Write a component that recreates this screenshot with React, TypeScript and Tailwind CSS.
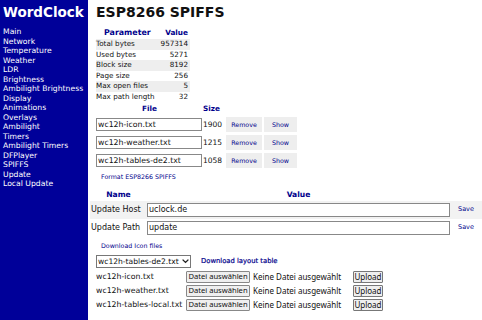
const font = "font-['DejaVu_Sans',Verdana,sans-serif]";
const uiFont = "font-['Noto_Sans','Open_Sans',sans-serif]";

const navItems = [
  "Main",
  "Network",
  "Temperature",
  "Weather",
  "LDR",
  "Brightness",
  "Ambilight Brightness",
  "Display",
  "Animations",
  "Overlays",
  "Ambilight",
  "Timers",
  "Ambilight Timers",
  "DFPlayer",
  "SPIFFS",
  "Update",
  "Local Update",
];

const params: [string, string][] = [
  ["Total bytes", "957314"],
  ["Used bytes", "5271"],
  ["Block size", "8192"],
  ["Page size", "256"],
  ["Max open files", "5"],
  ["Max path length", "32"],
];

const files: [string, string][] = [
  ["wc12h-icon.txt", "1900"],
  ["wc12h-weather.txt", "1215"],
  ["wc12h-tables-de2.txt", "1058"],
];

const settings: [string, string][] = [
  ["Update Host", "uclock.de"],
  ["Update Path", "update"],
];

const uploads = ["wc12h-icon.txt", "wc12h-weather.txt", "wc12h-tables-local.txt"];

function Chevron() {
  return (
    <svg width="7" height="5" viewBox="0 0 7 5" fill="none" aria-hidden>
      <path d="M1 1l2.5 2.5L6 1" stroke="#222" strokeWidth="1.2" strokeLinecap="round" />
    </svg>
  );
}

function Sidebar() {
  return (
    <div className="w-[88px] shrink-0 bg-[#000099] px-[3px] pt-[3px] text-white">
      <div className="h-[24px] text-[13.5px] font-bold leading-[18px]">WordClock</div>
      <ul className="text-[7.7px] leading-[9.5px]">
        {navItems.map((item) => (
          <li key={item} className="whitespace-nowrap">
            {item}
          </li>
        ))}
      </ul>
    </div>
  );
}

export default function App() {
  return (
    <div className={`${font} flex h-[320px] w-[482px] overflow-hidden bg-white text-[#111]`}>
      <Sidebar />
      <div className="flex min-w-0 flex-1 flex-col pl-[8px] pt-[3px]">
        <h1 className="h-[24px] text-[14px] font-bold leading-[18px]">ESP8266 SPIFFS</h1>

        {/* spiffs info */}
        <table className="w-[94px] border-collapse text-[7.2px] leading-[10.6px]">
          <thead>
            <tr className="text-[7.3px] font-bold text-[#00008b]">
              <th className="h-[12px] pl-[8px] text-left text-[7.9px]">Parameter</th>
              <th className="pr-[2px] text-right">Value</th>
            </tr>
          </thead>
          <tbody>
            {params.map(([k, v], i) => (
              <tr key={k} className={i % 2 === 0 ? "bg-[#eeeeee]" : ""}>
                <td className="whitespace-nowrap pr-[4px]">{k}</td>
                <td className="pr-[2px] text-right">{v}</td>
              </tr>
            ))}
          </tbody>
        </table>

        {/* files */}
        <table className="mt-[1px] w-[202px] border-collapse text-[7px]">
          <thead>
            <tr className="text-[7.3px] font-bold text-[#00008b]">
              <th className="h-[12px] w-[107px] text-center">File</th>
              <th className="w-[22px] text-left">Size</th>
              <th />
              <th />
            </tr>
          </thead>
          <tbody>
            {files.map(([name, size]) => (
              <tr key={name} className="h-[18px]">
                <td className="py-[2px]">
                  <div className="flex h-[13px] w-[106px] items-center border border-[#888] px-[1px] text-[7.8px]">
                    {name}
                  </div>
                </td>
                <td className="text-[7.5px]">{size}</td>
                <td className="px-[1px]">
                  <div className="flex h-[15px] w-[36px] items-center justify-center bg-[#eeeeee] text-[6.3px] text-[#00008b]">
                    Remove
                  </div>
                </td>
                <td className="px-[1px]">
                  <div className="flex h-[15px] w-[33px] items-center justify-center bg-[#eeeeee] text-[6.3px] text-[#00008b]">
                    Show
                  </div>
                </td>
              </tr>
            ))}
          </tbody>
        </table>

        <div className="h-[19px] pl-[5px] text-[6.3px] leading-[14px] text-[#00008b]">
          Format ESP8266 SPIFFS
        </div>

        {/* update server */}
        <div className="-ml-[6px] flex w-[392px] flex-col">
          <div className="flex h-[12px] items-center text-[7.6px] font-bold text-[#00008b]">
            <span className="w-[57px] text-center">Name</span>
            <span className="w-[303px] text-center">Value</span>
          </div>
          {settings.map(([label, value], i) => (
            <div
              key={label}
              className={`flex h-[18px] items-center ${i === 0 ? "bg-[#f2f2f2]" : ""}`}
            >
              <span className="w-[57px] whitespace-nowrap pl-[1px] text-[8px]">{label}</span>
              <div className="flex h-[14px] w-[303px] items-center border border-[#888] bg-white px-[1px] text-[8px]">
                {value}
              </div>
              <span className="flex-1 text-center text-[6.5px] text-[#00008b]">Save</span>
            </div>
          ))}
        </div>

        <div className="mt-[1px] h-[16px] pl-[5px] text-[6.3px] leading-[16px] text-[#00008b]">
          Download Icon files
        </div>

        <div className="flex h-[16px] items-center gap-[10px]">
          <div className="flex h-[13px] w-[95px] items-center justify-between border border-[#777] px-[1px] text-[7.6px]">
            <span>wc12h-tables-de2.txt</span>
            <Chevron />
          </div>
          <span className="text-[6.8px] text-[#00008b] [-webkit-text-stroke:0.2px_#00008b]">
            Download layout table
          </span>
        </div>

        <div className="flex flex-col text-[7.8px]">
          {uploads.map((u) => (
            <div key={u} className="flex h-[14px] items-center">
              <span className="w-[90px] whitespace-nowrap">{u}</span>
              <span
                className={`${uiFont} flex h-[12px] w-[64px] items-center justify-center rounded-[1px] border border-[#888] bg-[#efefef] text-[7.6px]`}
              >
                Datei auswählen
              </span>
              <span className={`${uiFont} ml-[3px] w-[100px] whitespace-nowrap text-[8px]`}>
                Keine Datei ausgewählt
              </span>
              <span
                className={`${uiFont} flex h-[12px] w-[30px] items-center justify-center rounded-[1px] border border-[#777] bg-[#efefef] text-[8px]`}
              >
                Upload
              </span>
            </div>
          ))}
        </div>
      </div>
    </div>
  );
}
